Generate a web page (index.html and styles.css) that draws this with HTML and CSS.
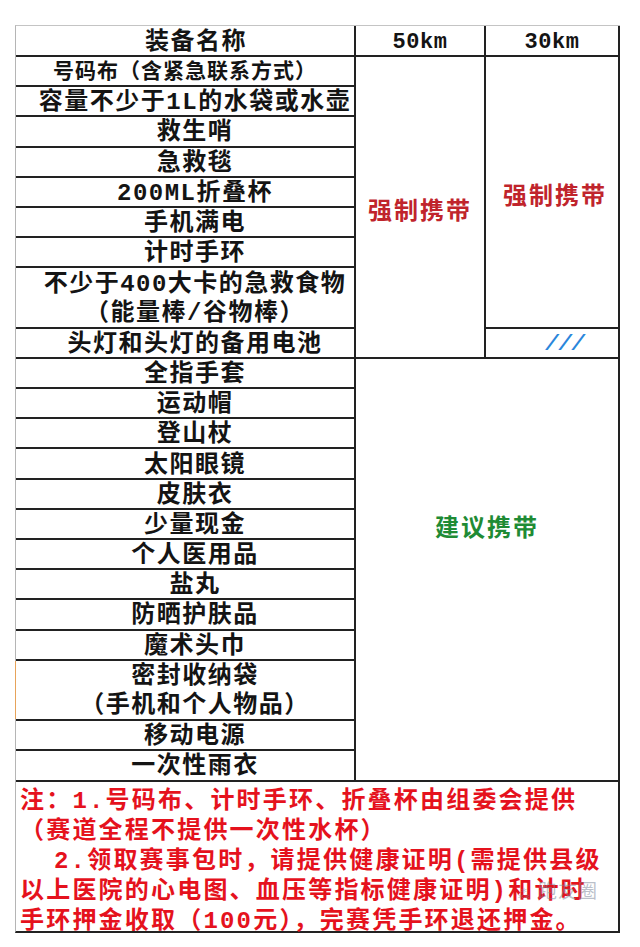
FILE: index.html
```html
<!DOCTYPE html>
<html lang="zh-CN">
<head>
<meta charset="utf-8">
<title>装备清单</title>
<link rel="stylesheet" href="styles.css">
</head>
<body>
<div class="sheet">
  <div class="table">
    <div class="cell head name">装备名称</div>
    <div class="cell head km">50km</div>
    <div class="cell head km">30km</div>

    <div class="cell item small">号码布（含紧急联系方式）</div>
    <div class="cell req req50">强制携带</div>
    <div class="cell req req30">强制携带</div>
    <div class="cell item">容量不少于1L的水袋或水壶</div>
    <div class="cell item">救生哨</div>
    <div class="cell item">急救毯</div>
    <div class="cell item">200ML折叠杯</div>
    <div class="cell item">手机满电</div>
    <div class="cell item">计时手环</div>
    <div class="cell item double">不少于400大卡的急救食物<br>（能量棒/谷物棒）</div>
    <div class="cell item">头灯和头灯的备用电池</div>
    <div class="cell none">///</div>

    <div class="cell item">全指手套</div>
    <div class="cell suggest">建议携带</div>
    <div class="cell item">运动帽</div>
    <div class="cell item">登山杖</div>
    <div class="cell item">太阳眼镜</div>
    <div class="cell item">皮肤衣</div>
    <div class="cell item">少量现金</div>
    <div class="cell item">个人医用品</div>
    <div class="cell item">盐丸</div>
    <div class="cell item">防晒护肤品</div>
    <div class="cell item">魔术头巾</div>
    <div class="cell item double edge">密封收纳袋<br>（手机和个人物品）</div>
    <div class="cell item">移动电源</div>
    <div class="cell item">一次性雨衣</div>
  </div>
  <div class="notes">
    <div class="line">注：1.号码布、计时手环、折叠杯由组委会提供</div>
    <div class="line">（赛道全程不提供一次性水杯）</div>
    <div class="line indent">2.领取赛事包时，请提供健康证明(需提供县级</div>
    <div class="line">以上医院的心电图、血压等指标健康证明)和计时</div>
    <div class="line">手环押金收取（100元），完赛凭手环退还押金。</div>
    <div class="mark"><span class="mark-icon">⁂</span>跑友圈</div>
  </div>
</div>
</body>
</html>
```
FILE: styles.css
```css
* { box-sizing: border-box; }
html, body { margin: 0; padding: 0; background: #fff; }
body {
  font-family: "Liberation Mono", "Noto Sans CJK SC", monospace;
  color: #141414;
}
.sheet {
  padding: 25px 0 0 15px;
  width: 620px;
}
.table {
  display: grid;
  grid-template-columns: 340px 130px 134px;
  grid-template-rows: 31px repeat(24, 30.2px);
  border-left: 1px solid #b5b5b5;
  border-top: 1px solid #c4c4c4;
  width: 605px;
}
.cell {
  border-right: 2px solid #222;
  border-bottom: 2px solid #222;
  display: flex;
  align-items: center;
  justify-content: center;
  text-align: center;
  font-weight: 700;
  white-space: nowrap;
  padding-top: 3px;
}
.head.name {
  font-size: 24px;
  letter-spacing: 1.5px;
  padding-left: 22px;
  padding-top: 5px;
  line-height: 28px;
}
.head.km {
  font-size: 22px;
  letter-spacing: 0.5px;
  line-height: 28px;
  padding-top: 5px;
}
.item {
  grid-column: 1;
  font-size: 24px;
  letter-spacing: 1.5px;
  line-height: 29px;
  padding-left: 20px;
}
.item.small {
  font-size: 21px;
  letter-spacing: 1px;
  padding-left: 0;
}
.item.double { grid-row: span 2; }
.edge { position: relative; }
.edge::before {
  content: "";
  position: absolute;
  left: -1px;
  top: 0;
  bottom: 0;
  width: 1px;
  background: #e7a35a;
}
.req {
  color: #c0242c;
  font-size: 24px;
  letter-spacing: 2px;
}
.req50 { grid-column: 2; grid-row: 2 / span 10; }
.req30 { grid-column: 3; grid-row: 2 / span 9; padding-left: 6px; }
.none {
  grid-column: 3;
  grid-row: 11;
  color: #2a86db;
  font-style: italic;
  font-size: 22px;
  letter-spacing: 0;
  padding-left: 26px;
}
.suggest {
  grid-column: 2 / span 2;
  grid-row: 12 / span 14;
  color: #1f8b35;
  font-size: 24px;
  letter-spacing: 2px;
  padding-bottom: 90px;
}
.notes {
  position: relative;
  width: 605px;
  height: 151px;
  border-left: 1px solid #b5b5b5;
  border-right: 2px solid #222;
  border-bottom: 2px solid #222;
  padding: 5px 0 0 4px;
  color: #e5121d;
  font-weight: 700;
  font-size: 24px;
  letter-spacing: 2.2px;
  white-space: nowrap;
}
.line { height: 30px; line-height: 30px; }
.indent { padding-left: 34px; }
.mark {
  position: absolute;
  right: 20px;
  top: 94px;
  font-family: "Noto Sans CJK SC", sans-serif;
  font-size: 19px;
  font-weight: 400;
  letter-spacing: 1px;
  color: rgba(120, 130, 150, 0.5);
}
.mark-icon { font-size: 14px; margin-right: 6px; }
```
